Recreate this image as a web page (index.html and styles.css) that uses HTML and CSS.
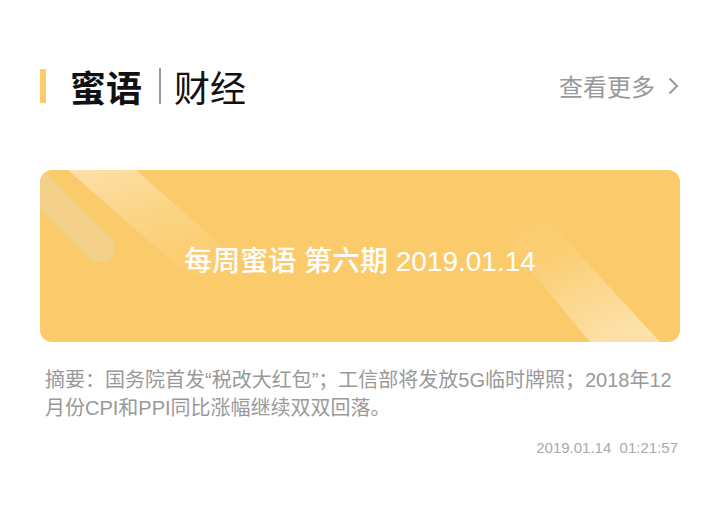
FILE: index.html
```html
<!DOCTYPE html>
<html lang="zh-CN">
<head>
<meta charset="utf-8">
<title>蜜语财经</title>
<link rel="stylesheet" href="styles.css">
</head>
<body>
<div class="page">
  <div class="header">
    <span class="mark"></span>
    <span class="title-main">蜜语</span>
    <span class="divider"></span>
    <span class="title-sub">财经</span>
    <a class="more">查看更多
      <svg class="chev" width="11" height="18" viewBox="0 0 11 18"><polyline points="1.5,1.5 9,9 1.5,16.5" fill="none" stroke="#9a9a9a" stroke-width="2"/></svg>
    </a>
  </div>
  <div class="card">
    <svg class="deco" width="640" height="172" viewBox="0 0 640 172">
      <defs>
        <linearGradient id="gb" x1="0" y1="0" x2="0.45" y2="1">
          <stop offset="0" stop-color="#fff" stop-opacity="0.42"/>
          <stop offset="0.45" stop-color="#fff" stop-opacity="0.18"/>
          <stop offset="1" stop-color="#fff" stop-opacity="0"/>
        </linearGradient>
        <linearGradient id="gc" x1="0" y1="0" x2="0.7" y2="1">
          <stop offset="0" stop-color="#fff" stop-opacity="0"/>
          <stop offset="0.4" stop-color="#fff" stop-opacity="0.06"/>
          <stop offset="1" stop-color="#fff" stop-opacity="0.42"/>
        </linearGradient>
      </defs>
      <line x1="-40" y1="-22.5" x2="60" y2="77.5" stroke="#e9d8b8" stroke-opacity="0.4" stroke-width="30" stroke-linecap="round"/>
      <polygon points="28,0 96,0 230,118 162,118" fill="url(#gb)"/>
      <polygon points="445,45 503,45 620,172 550,172" fill="url(#gc)"/>
    </svg>
    <div class="card-title">每周蜜语 第六期 2019.01.14</div>
  </div>
  <p class="summary">摘要：国务院首发“税改大红包”；工信部将发放5G临时牌照；2018年12月份CPI和PPI同比涨幅继续双双回落。</p>
  <div class="time">2019.01.14&nbsp;&nbsp;01:21:57</div>
</div>
</body>
</html>
```
FILE: styles.css
```css
html, body {
  margin: 0;
  padding: 0;
  background: #ffffff;
}
body {
  font-family: "Liberation Sans", "Noto Sans CJK SC", sans-serif;
}
.page {
  padding: 66px 40px 0 40px;
}
.header {
  display: flex;
  align-items: center;
  height: 40px;
}
.mark {
  width: 6px;
  height: 34px;
  background: #fdca6c;
  margin-right: 24px;
}
.title-main {
  font-family: "Noto Sans CJK SC", sans-serif;
  font-size: 36px;
  font-weight: 700;
  color: #111;
  line-height: 40px;
}
.divider {
  width: 2px;
  height: 36px;
  background: #9a9a9a;
  margin: 0 13px 0 17px;
}
.title-sub {
  font-family: "Noto Sans CJK SC", sans-serif;
  font-size: 36px;
  font-weight: 400;
  color: #111;
  line-height: 40px;
}
.more {
  margin-left: auto;
  display: flex;
  align-items: center;
  font-family: "Noto Sans CJK SC", sans-serif;
  font-size: 24px;
  color: #999;
  line-height: 40px;
}
.chev {
  margin-left: 13px;
  margin-right: 1px;
}
.card {
  position: relative;
  margin-top: 64px;
  height: 172px;
  border-radius: 12px;
  background: #fbcb6b;
  overflow: hidden;
  display: flex;
  align-items: center;
  justify-content: center;
}
.deco {
  position: absolute;
  left: 0;
  top: 0;
}
.card-title {
  position: relative;
  color: #fff;
  font-size: 28px;
  font-weight: 500;
  margin-top: 6px;
}
.summary {
  margin: 24px 0 0 0;
  padding: 0 0 0 5px;
  font-size: 20px;
  line-height: 28px;
  color: #999;
}
.time {
  margin-top: 16px;
  text-align: right;
  padding-right: 2px;
  font-size: 15px;
  line-height: 20px;
  color: #aaa;
}
```
